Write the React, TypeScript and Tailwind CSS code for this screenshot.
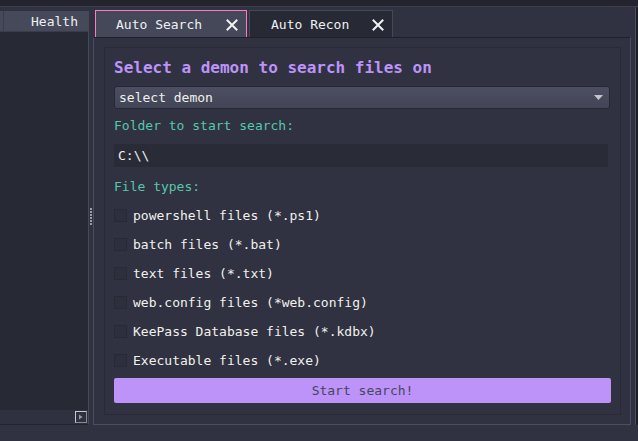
// @ts-nocheck
import { useState } from 'react';

const fileTypes = [
  'powershell files (*.ps1)',
  'batch files (*.bat)',
  'text files (*.txt)',
  'web.config files (*web.config)',
  'KeePass Database files (*.kdbx)',
  'Executable files (*.exe)',
];

function CloseIcon() {
  return (
    <svg width="12" height="12" viewBox="0 0 12 12">
      <path d="M1.5 1.5 L10.5 10.5 M10.5 1.5 L1.5 10.5" stroke="#f1f1f1" strokeWidth="2" strokeLinecap="square" />
    </svg>
  );
}

function Tab({ label, active }) {
  return (
    <div
      className={
        'flex items-center h-[27px] pt-[2px] pr-[8px] border border-b-0 ' +
        (active
          ? 'w-[152px] pl-[20px] bg-[#454859] border-[#ff79c6]'
          : 'w-[144px] pl-[21px] bg-[#272935] border-[#454859]')
      }
    >
      <span className="flex-1 text-[13px] text-[#eef0f4]">{label}</span>
      <CloseIcon />
    </div>
  );
}

export default function App() {
  const [checked, setChecked] = useState(fileTypes.map(() => false));

  return (
    <div
      className="w-[638px] h-[441px] bg-[#303241] flex flex-col overflow-hidden"
      style={{ fontFamily: '"DejaVu Sans Mono", "Liberation Mono", monospace' }}
    >
      <div className="h-[7px] bg-[#23242e] border-b border-[#3c3e4d]" />
      <div className="flex h-[418px]">
        {/* left panel */}
        <div className="w-[89px] mt-[4px] flex flex-col border-r border-[#46495a] border-b border-b-[#22232d]">
          <div className="h-[21px] flex bg-[#464959] border-b border-[#3a3c4b]">
            <div className="w-[4px] border-r border-[#3a3c4b]" />
            <div className="flex-1 flex items-center justify-end pt-[2px] pr-[10px] text-[13px] text-[#eef0f4]">Health</div>
          </div>
          <div className="flex-1 bg-[#272935]" />
          <div className="h-[14px] bg-[#2f3140] flex justify-end items-center pr-[1px]">
            <div className="w-[12px] h-[12px] border border-[#c8c8c8] border-b-[#8a8a8a] border-r-[#8a8a8a] flex items-center justify-center">
              <svg width="6" height="6" viewBox="0 0 6 6">
                <path d="M1 0.5 L1 5.5 L4.5 3 Z" fill="#9a9aa4" />
              </svg>
            </div>
          </div>
        </div>
        {/* splitter */}
        <div className="w-[4px] flex flex-col items-center justify-center gap-[1px]">
          {[0, 1, 2, 3, 4, 5].map((i) => (
            <div key={i} className="w-[2px] h-[2px] bg-[#9a9cab]" />
          ))}
        </div>
        {/* right panel */}
        <div className="flex-1 flex flex-col border-r border-[#4b4e60] pr-[4px]">
          <div className="h-[30px] flex items-end gap-[2px] pl-[2px]">
            <Tab label="Auto Search" active />
            <Tab label="Auto Recon" />
          </div>
          <div className="h-[388px] border border-[#4b4e60] border-t-[#1f2029] pl-[10px] pr-[9px] pt-[9px]">
            <div className="h-[368px] border border-[#282a36] flex flex-col px-[9px]">
              <div className="mt-[10px] h-[20px] leading-[20px] text-[16px] font-bold text-[#bd93f9]">
                Select a demon to search files on
              </div>
              <div className="mt-[8px] mr-[1px] h-[23px] rounded-[3px] border border-[#262833] bg-gradient-to-b from-[#4c4f61] to-[#424556] flex items-center pl-[4px] pr-[6px]">
                <span className="flex-1 text-[13px] text-[#f1f1ec]">select demon</span>
                <svg width="9" height="5" viewBox="0 0 9 5">
                  <path d="M0 0 L9 0 L4.5 5 Z" fill="#c4c5cc" />
                </svg>
              </div>
              <div className="mt-[7px] h-[20px] leading-[20px] text-[13px] text-[#56c8aa]">Folder to start search:</div>
              <div className="mt-[8px] mr-[3px] h-[23px] bg-[#292b37] flex items-center pl-[4px] text-[13px] text-[#f1f1ec]">
                C:\\
              </div>
              <div className="mt-[10px] h-[20px] leading-[20px] text-[13px] text-[#56c8aa]">File types:</div>
              <div className="mt-[4px] flex flex-col">
                {fileTypes.map((t, i) => (
                  <label key={t} className="h-[29px] flex items-center gap-[6px] cursor-pointer">
                    <span
                      onClick={() => setChecked(checked.map((c, j) => (j === i ? !c : c)))}
                      className={
                        'w-[13px] h-[13px] border border-[#272935] ' + (checked[i] ? 'bg-[#bd93f9]' : 'bg-[#2d2f3c]')
                      }
                    />
                    <span className="text-[13px] text-[#f1f1ec]">{t}</span>
                  </label>
                ))}
              </div>
              <button className="mt-[3px] h-[25px] rounded-[2px] bg-[#bd93f9] text-[13px] text-[#44475a]">
                Start search!
              </button>
            </div>
          </div>
        </div>
        <div className="w-[2px] bg-[#1d1e26]" />
      </div>
    </div>
  );
}
